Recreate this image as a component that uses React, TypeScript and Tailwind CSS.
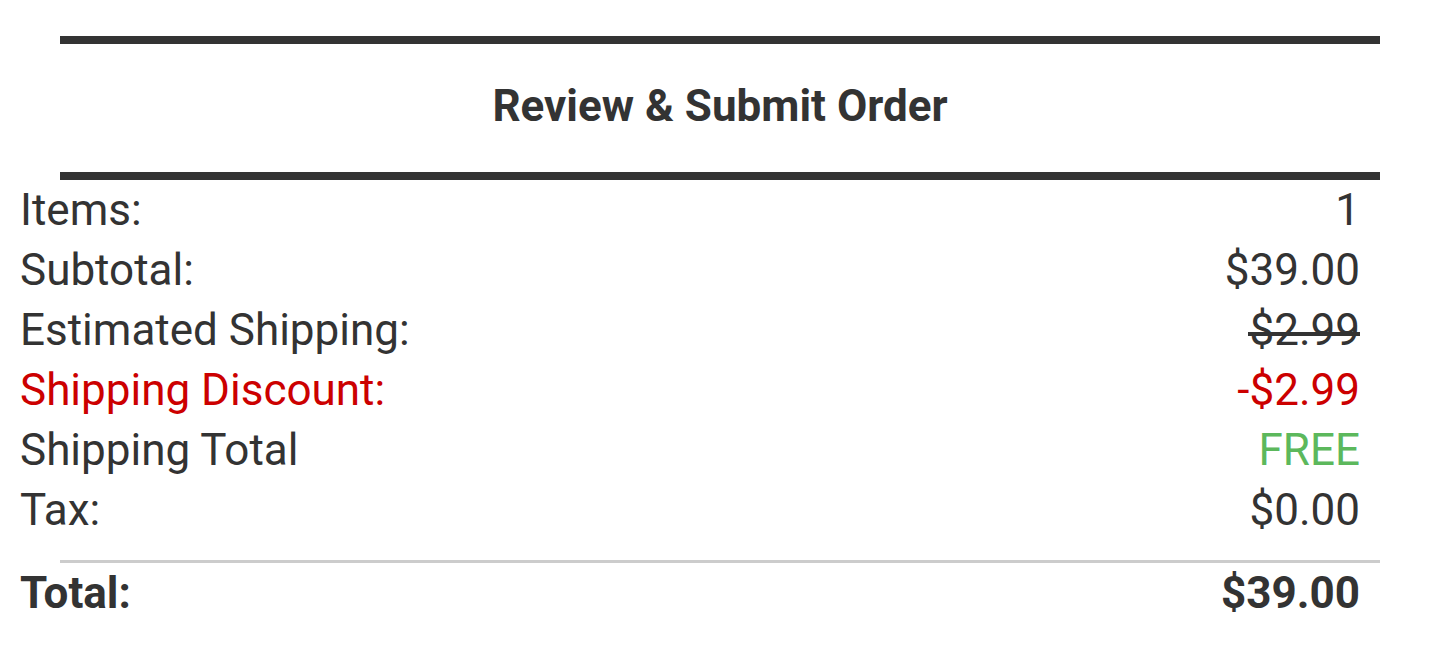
import React from 'react'

type Row = {
  label: string
  value: string
  labelClass?: string
  valueClass?: string
  struck?: boolean
}

const rows: Row[] = [
  { label: 'Items:', value: '1' },
  { label: 'Subtotal:', value: '$39.00' },
  { label: 'Estimated Shipping:', value: '$2.99', struck: true },
  {
    label: 'Shipping Discount:',
    value: '-$2.99',
    labelClass: 'text-[#cc0000]',
    valueClass: 'text-[#cc0000]',
  },
  { label: 'Shipping Total', value: 'FREE', valueClass: 'text-[#5cb85c]' },
  { label: 'Tax:', value: '$0.00' },
]

function SummaryRow({ row }: { row: Row }) {
  return (
    <div className="flex justify-between pl-[20px] pr-[80px] text-[44px] leading-[60px]">
      <span className={row.labelClass}>{row.label}</span>
      {row.struck ? (
        <span className="relative">
          {row.value}
          {/* thick strike line sits low over the price */}
          <span className="absolute left-[-1px] right-0 top-[32px] h-[4px] bg-[#333]" />
        </span>
      ) : (
        <span className={row.valueClass}>{row.value}</span>
      )}
    </div>
  )
}

export default function App() {
  return (
    <div className="min-h-[658px] w-full bg-white pt-[36px] font-['Roboto',sans-serif] text-[#333]">
      <div className="mx-[60px] border-y-8 border-[#333] pt-[40px] pb-[44px] text-center text-[44px] font-bold leading-[44px]">
        Review &amp; Submit Order
      </div>

      {rows.map((row) => (
        <SummaryRow key={row.label} row={row} />
      ))}

      <div className="mx-[60px] mt-5 border-t-[3px] border-[#cccccc]" />

      <div className="flex justify-between pl-[20px] pr-[80px] text-[44px] font-bold leading-[60px]">
        <span>Total:</span>
        <span>$39.00</span>
      </div>
    </div>
  )
}
